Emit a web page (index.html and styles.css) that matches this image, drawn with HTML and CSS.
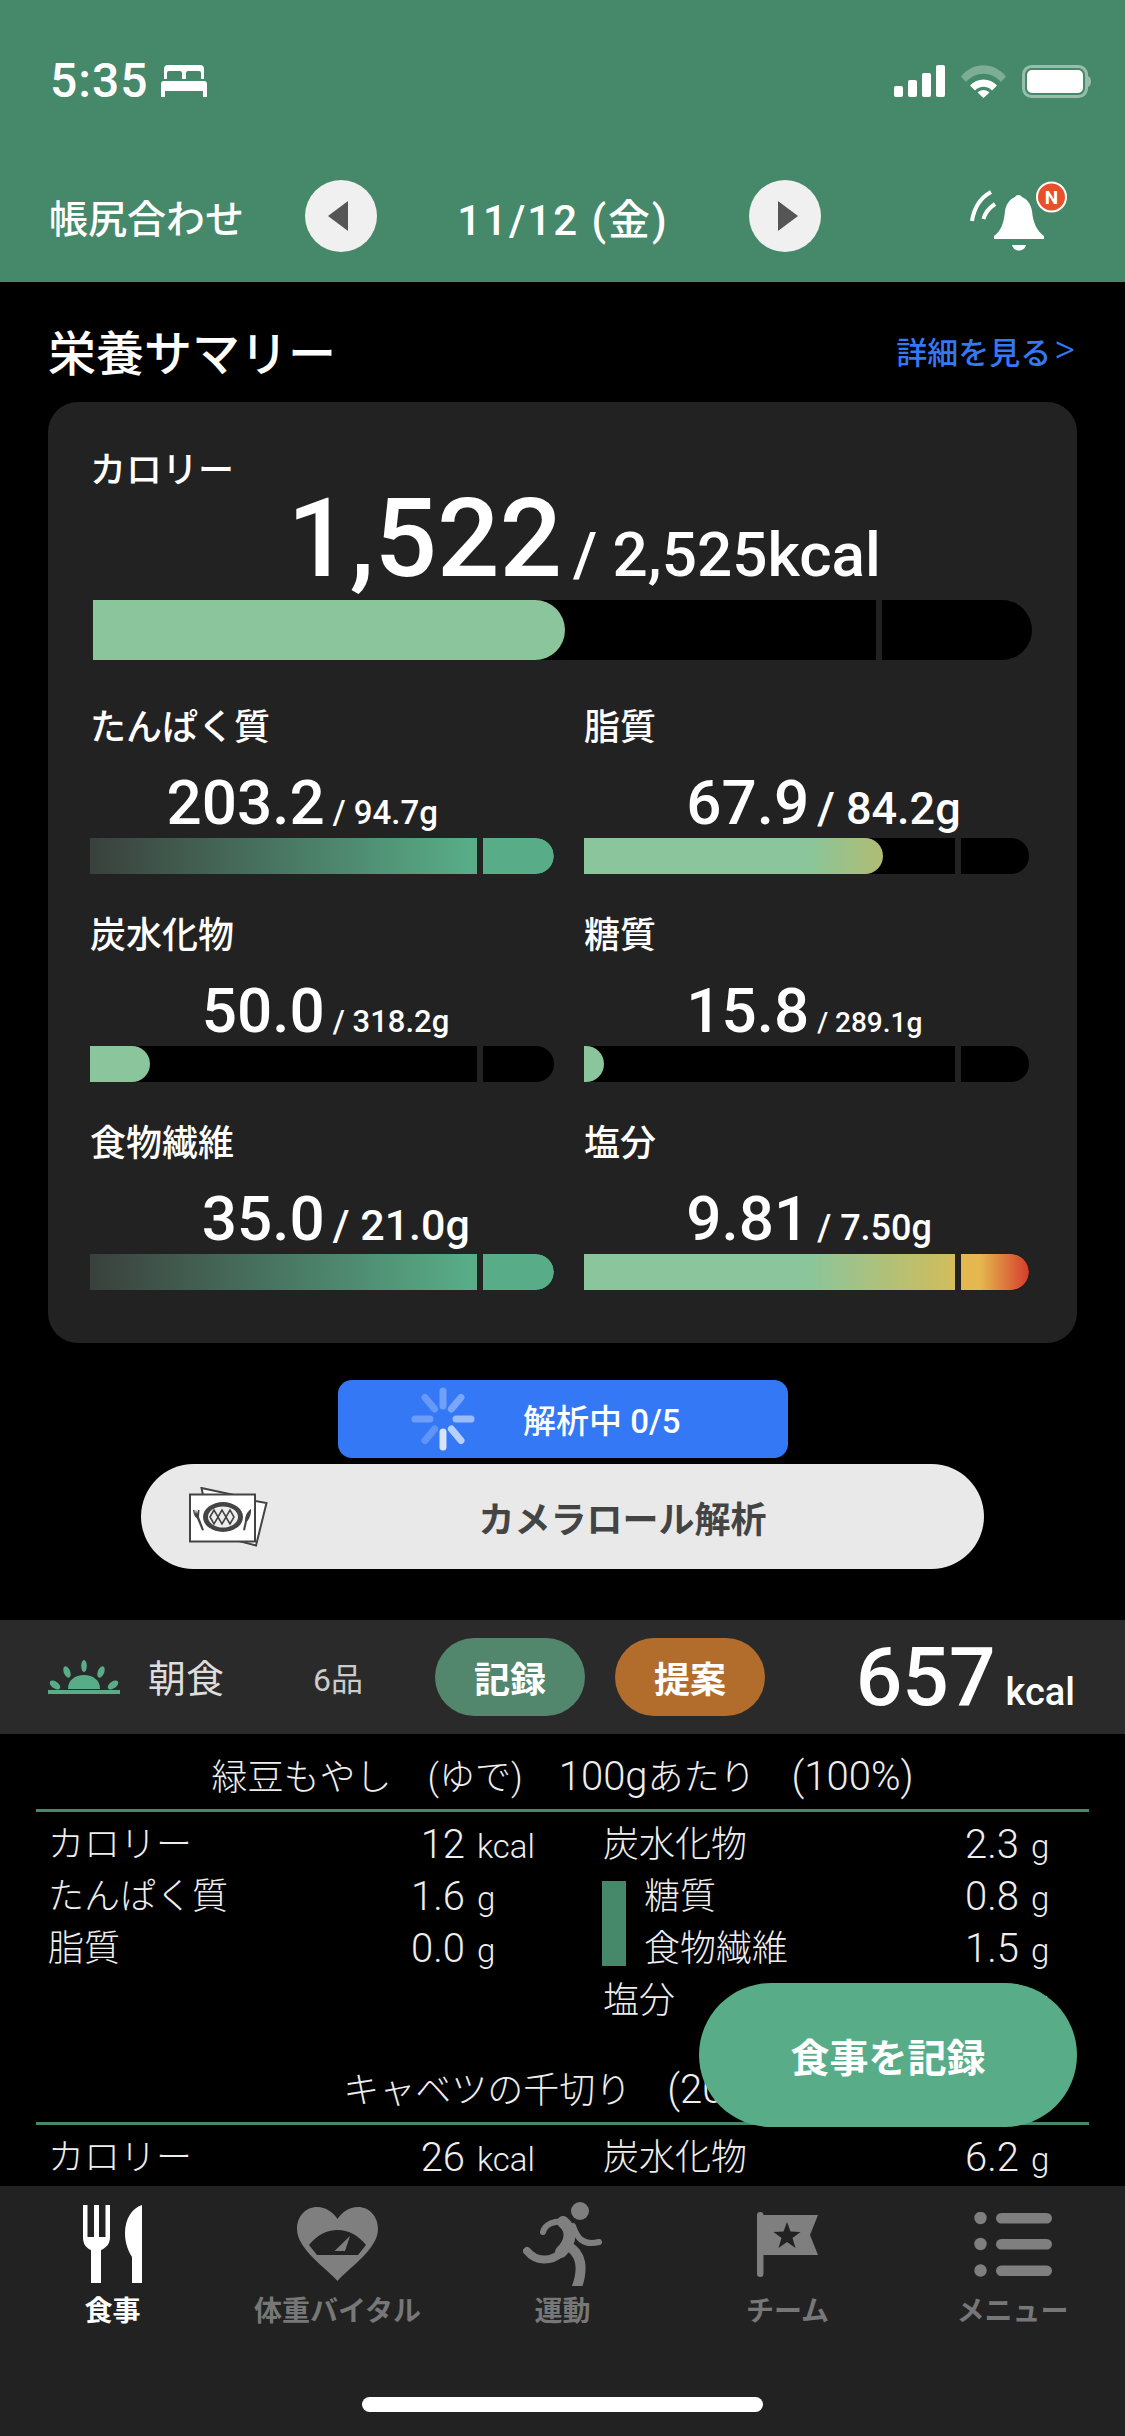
FILE: index.html
```html
<!DOCTYPE html>
<html lang="ja">
<head>
    <meta charset="UTF-8">
    <meta name="viewport" content="width=device-width, initial-scale=1.0">
    <title>栄養サマリー</title>
    <link rel="stylesheet" href="styles.css">
</head>
<body>
    <div class="app">
        <header class="header">
            <div class="status-bar">
                <span class="time">5:35</span>
                <svg class="bed" width="46" height="32" viewBox="0 0 46 32"><path fill="#fff" d="M3 14V4a4 4 0 0 1 4-4H39a4 4 0 0 1 4 4V14H40V8a2 2 0 0 0-2-2H27a2 2 0 0 0-2 2V14H21V8a2 2 0 0 0-2-2H8a2 2 0 0 0-2 2V14ZM0 26V19a3 3 0 0 1 3-3H43a3 3 0 0 1 3 3V26ZM0 26h4v6H0ZM42 26h4v6h-4Z"/></svg>
                <div class="status-icons">
                    <svg width="51" height="32" viewBox="0 0 51 32"><g fill="#fff"><rect x="0" y="21" width="9" height="11" rx="2"/><rect x="14" y="15" width="9" height="17" rx="2"/><rect x="28" y="8" width="9" height="24" rx="2"/><rect x="42" y="0" width="9" height="32" rx="2"/></g></svg>
                    <svg width="45" height="33" viewBox="0 0 45 33"><path fill="#fff" fill-opacity=".3" d="M0 11.500C12 -3.500 33 -3.500 45 11.500L40 17C30 6 15 6 5 17Z"/><path fill="#fff" d="M9 20.500C16 12.500 29 12.500 36 20.500L31 25.500C26.500 20.500 18.500 20.500 14 25.500Z"/><path fill="#fff" d="M16.500 27.500C19.500 24 25.500 24 28.500 27.500L22.500 33Z"/></svg>
                    <svg width="69" height="33" viewBox="0 0 69 33"><rect x="1.500" y="1.500" width="63" height="30" rx="8" fill="none" stroke="#fff" stroke-opacity=".45" stroke-width="3"/><rect x="5" y="5" width="56" height="23" rx="5" fill="#fff"/><path fill="#fff" fill-opacity=".45" d="M66 11c2 .5 3 3 3 5.500s-1 5-3 5.500Z"/></svg>
                </div>
            </div>
            <nav class="date-nav">
                <span class="nav-title">帳尻合わせ</span>
                <button class="round-btn"><svg class="arrow-prev" width="20" height="30" viewBox="0 0 20 30"><path fill="#555" d="M20 0V30L0 15Z"/></svg></button>
                <span class="nav-date">11/12 (金)</span>
                <button class="round-btn"><svg class="arrow-next" width="20" height="30" viewBox="0 0 20 30"><path fill="#555" d="M0 0V30L20 15Z"/></svg></button>
                <div class="bell">
                    <svg width="103" height="75" viewBox="25 18 103 75">
                        <path fill="none" stroke="#fff" stroke-width="4" d="M50 31C39 37 33 47 31 60M54 43C48 47 44 52 42.500 58"/>
                        <path fill="#fff" d="M53 78V75C60 70 63 62 64 50C65 43 69 38 74 36A4 4 0 0 1 81 36C86 38 90 43 91 50C92 62 96 70 103 75V78ZM71 84H85C84 88 81 89.500 78 89.500C75 89.500 72 88 71 84Z"/>
                        <circle cx="110.500" cy="36" r="14.500" fill="#e8502a" stroke="#fff" stroke-width="2"/>
                        <text class="bell-n" x="110.500" y="42.500" text-anchor="middle">N</text>
                    </svg>
                </div>
            </nav>
        </header>

        <main class="content">
            <div class="summary-head">
                <h1>栄養サマリー</h1>
                <a class="detail-link">詳細を見る<span class="chevron">&gt;</span></a>
            </div>

            <section class="card">
                <div class="label">カロリー</div>
                <div class="value value-main"><span class="num">1,522</span><span class="sub">/ 2,525kcal</span></div>
                <div class="bar bar-main">
                    <div class="fill fill-green" style="width: 50.3%"></div>
                    <i class="tick"></i>
                </div>

                <div class="nutrients">
                    <div class="nutrient">
                        <div class="label">たんぱく質</div>
                        <div class="value"><span class="num">203.2</span><span class="sub s33">/ 94.7g</span></div>
                        <div class="bar">
                            <div class="fill fill-over" style="width: 100%"></div>
                            <i class="tick"></i>
                        </div>
                    </div>
                    <div class="nutrient">
                        <div class="label">脂質</div>
                        <div class="value"><span class="num">67.9</span><span class="sub s45">/ 84.2g</span></div>
                        <div class="bar">
                            <div class="fill fill-warn" style="width: 67.2%"></div>
                            <i class="tick"></i>
                        </div>
                    </div>
                    <div class="nutrient">
                        <div class="label">炭水化物</div>
                        <div class="value"><span class="num">50.0</span><span class="sub s31">/ 318.2g</span></div>
                        <div class="bar">
                            <div class="fill fill-green" style="width: 12.9%"></div>
                            <i class="tick"></i>
                        </div>
                    </div>
                    <div class="nutrient">
                        <div class="label">糖質</div>
                        <div class="value"><span class="num">15.8</span><span class="sub s28">/ 289.1g</span></div>
                        <div class="bar">
                            <div class="fill fill-green" style="width: 4.5%"></div>
                            <i class="tick"></i>
                        </div>
                    </div>
                    <div class="nutrient">
                        <div class="label">食物繊維</div>
                        <div class="value"><span class="num">35.0</span><span class="sub s43">/ 21.0g</span></div>
                        <div class="bar">
                            <div class="fill fill-over" style="width: 100%"></div>
                            <i class="tick"></i>
                        </div>
                    </div>
                    <div class="nutrient">
                        <div class="label">塩分</div>
                        <div class="value"><span class="num">9.81</span><span class="sub s36">/ 7.50g</span></div>
                        <div class="bar">
                            <div class="fill fill-salt" style="width: 100%"></div>
                            <i class="tick"></i>
                        </div>
                    </div>
                </div>
            </section>

            <div class="analyzing">
                <svg class="spinner" width="68" height="68" viewBox="-34 -34 68 68">
                    <g stroke="#fff" stroke-width="7" stroke-linecap="round">
                        <line y1="-13" y2="-28" stroke-opacity=".3"/>
                        <line y1="-13" y2="-28" stroke-opacity=".35" transform="rotate(40)"/>
                        <line y1="-13" y2="-28" stroke-opacity=".5" transform="rotate(90)"/>
                        <line y1="-13" y2="-28" stroke-opacity=".65" transform="rotate(140)"/>
                        <line y1="-13" y2="-28" stroke-opacity=".8" transform="rotate(180)"/>
                        <line y1="-13" y2="-28" stroke-opacity=".22" transform="rotate(220)"/>
                        <line y1="-13" y2="-28" stroke-opacity=".28" transform="rotate(270)"/>
                        <line y1="-13" y2="-28" stroke-opacity=".25" transform="rotate(320)"/>
                    </g>
                </svg>
                <span>解析中 0/5</span>
            </div>
            <div class="camera-roll">
                <svg class="camera-icon" width="80" height="60" viewBox="0 0 80 60">
                    <g fill="#fff" stroke="#444" stroke-width="2">
                        <path d="M12.500 1L45 8H14Z"/>
                        <path d="M60 13L77.500 16L67 58.500L50 54H62Z"/>
                        <rect x="1" y="7.500" width="65" height="47"/>
                    </g>
                    <ellipse cx="34" cy="30" rx="20" ry="15" fill="#444"/>
                    <ellipse cx="34" cy="30" rx="15" ry="10.500" fill="#eee"/>
                    <path fill="none" stroke="#444" stroke-width="1.600" d="M21 30L25 23L29 30L33 23L37 30L41 23L45 30L41 37L37 30L33 37L29 30L25 37Z"/>
                    <path fill="#444" d="M4 23L5.500 23L6 27L7 22.500L8 27L9 23L10.500 23L10 30L15 43L13 43.500L8 31.500C5.500 30 4.500 27 4 23Z"/>
                    <path fill="#444" d="M62 22C62.500 27 60 33 58 34.500L56 43.500L54 43L56 34C56 28 59 24 62 22Z"/>
                </svg>
                <span>カメラロール解析</span>
            </div>

            <div class="meal-head">
                <svg class="sun" width="72" height="34" viewBox="0 0 72 34">
                    <g fill="#58ad88">
                        <rect x="0" y="30" width="72" height="4"/>
                        <path d="M20 29C20 20 27 15 36 15C45 15 52 20 52 29Z"/>
                        <ellipse cx="36" cy="6" rx="2.800" ry="6"/>
                        <ellipse cx="19" cy="12" rx="3.200" ry="6" transform="rotate(-22 19 12)"/>
                        <ellipse cx="53" cy="12" rx="3.200" ry="6" transform="rotate(22 53 12)"/>
                        <ellipse cx="7" cy="25" rx="3.500" ry="6" transform="rotate(-55 7 25)"/>
                        <ellipse cx="65" cy="25" rx="3.500" ry="6" transform="rotate(55 65 25)"/>
                    </g>
                </svg>
                <span class="meal-name">朝食</span>
                <span class="meal-count">6品</span>
                <button class="pill pill-record">記録</button>
                <button class="pill pill-suggest">提案</button>
                <div class="meal-kcal"><span class="meal-num">657</span><span class="meal-unit">kcal</span></div>
            </div>

            <section class="food">
                <div class="food-title">緑豆もやし　(ゆで)　<span class="latin">100g</span>あたり　<span class="latin">(100%)</span></div>
                <div class="food-grid">
                    <div class="col col-left">
                        <div class="row"><span>カロリー</span><span class="amount">12<span class="unit">kcal</span></span></div>
                        <div class="row"><span>たんぱく質</span><span class="amount">1.6<span class="unit">g</span></span></div>
                        <div class="row"><span>脂質</span><span class="amount">0.0<span class="unit">g</span></span></div>
                    </div>
                    <div class="col col-right">
                        <div class="row"><span>炭水化物</span><span class="amount">2.3<span class="unit">g</span></span></div>
                        <div class="sub-group">
                            <div class="sub-mark"></div>
                            <div class="sub-rows">
                                <div class="row"><span>糖質</span><span class="amount">0.8<span class="unit">g</span></span></div>
                                <div class="row"><span>食物繊維</span><span class="amount">1.5<span class="unit">g</span></span></div>
                            </div>
                        </div>
                        <div class="row"><span>塩分</span><span class="amount">0.0<span class="unit">g</span></span></div>
                    </div>
                </div>
            </section>

            <section class="food">
                <div class="food-title">キャベツの千切り　<span class="latin">(200g)</span></div>
                <div class="food-grid">
                    <div class="col col-left">
                        <div class="row"><span>カロリー</span><span class="amount">26<span class="unit">kcal</span></span></div>
                    </div>
                    <div class="col col-right">
                        <div class="row"><span>炭水化物</span><span class="amount">6.2<span class="unit">g</span></span></div>
                    </div>
                </div>
            </section>

            <button class="record-fab">食事を記録</button>
        </main>

        <footer class="tabbar">
            <div class="tab active">
                <div class="tab-icon">
                    <svg width="60" height="78" viewBox="0 0 60 78"><path fill="#fff" d="M0 0H4.500V32H11V0H16V32H22.500V0H27V32C27 39 23 43 18 45V78H8V45C3 43 0 39 0 32Z"/><path fill="#fff" d="M59 0V78H49V52C44 44 42 36 42 28C42 14 49 3 59 0Z"/></svg>
                </div>
                <span>食事</span>
            </div>
            <div class="tab">
                <div class="tab-icon">
                    <svg width="81" height="74" viewBox="0 0 81 74"><path fill="#7f7f7f" d="M40.500 74C28 60 0 42 0 22C0 9 9 0 20 0C29 0 36 5 40.500 12C45 5 52 0 61 0C72 0 81 9 81 22C81 42 53 60 40.500 74Z"/><path fill="#222" d="M12 38C20 28 30 23 40.500 23C51 23 61 28 69 38L61 48H20Z"/><path fill="#7f7f7f" d="M53 29L48 44H37.500Z"/></svg>
                </div>
                <span>体重バイタル</span>
            </div>
            <div class="tab">
                <div class="tab-icon">
                    <svg width="80" height="84" viewBox="0 0 80 84">
                        <ellipse cx="57" cy="9" rx="9" ry="9" fill="#7f7f7f"/>
                        <g fill="none" stroke="#7f7f7f" stroke-linecap="round">
                            <path stroke-width="6" d="M20 30C22 22 32 18 42 20"/>
                            <path stroke-width="12" d="M40 20C50 28 48 40 38 50"/>
                            <path stroke-width="8" d="M38 51C28 60 13 60 4 49"/>
                            <path stroke-width="10" d="M44 44C58 50 62 66 52 90"/>
                            <path stroke-width="6" d="M50 24C54 36 60 44 76 40"/>
                        </g>
                    </svg>
                </div>
                <span>運動</span>
            </div>
            <div class="tab">
                <div class="tab-icon">
                    <svg width="61" height="65" viewBox="0 0 61 65"><rect width="6.500" height="65" rx="3.200" fill="#7f7f7f"/><path fill="#7f7f7f" d="M6 3H61L53 23L61 43H6Z"/><path fill="#222" d="M30 10L33.500 19.500L43.500 20L35.500 26L38.500 36L30 30L21.500 36L24.500 26L16.500 20L26.500 19.500Z"/></svg>
                </div>
                <span>チーム</span>
            </div>
            <div class="tab">
                <div class="tab-icon">
                    <svg width="78" height="65" viewBox="0 0 78 65"><g fill="#7f7f7f"><circle cx="6.500" cy="6" r="6.200"/><circle cx="6.500" cy="32" r="6.200"/><circle cx="6.500" cy="58.500" r="6.200"/><rect x="22" y="1" width="56" height="10.500" rx="5.200"/><rect x="22" y="27" width="56" height="10.500" rx="5.200"/><rect x="22" y="53.500" width="56" height="10.500" rx="5.200"/></g></svg>
                </div>
                <span>メニュー</span>
            </div>
            <div class="home-indicator"></div>
        </footer>
    </div>
</body>
</html>
```

FILE: styles.css
```css
* {
    box-sizing: border-box;
}
body {
    margin: 0;
    background-color: #000;
    color: #fff;
    font-family: Roboto, "Noto Sans CJK JP", sans-serif;
}
button {
    border: none;
    padding: 0;
    font-family: inherit;
}
.app {
    width: 1125px;
    height: 2436px;
    display: flex;
    flex-direction: column;
    overflow: hidden;
}

/* Green header */
.header {
    height: 282px;
    padding-top: 58px;
    background-color: #46886a;
    flex-shrink: 0;
}
.status-bar {
    display: flex;
    align-items: center;
    height: 46px;
    padding: 0 34px 0 50px;
}
.time {
    font-size: 48px;
    font-weight: 500;
    line-height: 46px;
    letter-spacing: 1px;
}
.bed {
    margin-left: 12px;
}
.status-icons {
    display: flex;
    align-items: center;
    gap: 16px;
    margin-left: auto;
}
.date-nav {
    display: flex;
    align-items: center;
    height: 72px;
    margin-top: 76px;
    padding: 0 56px 0 49px;
}
.nav-title {
    width: 256px;
    font-size: 39px;
    font-weight: 500;
}
.round-btn {
    width: 72px;
    height: 72px;
    border-radius: 50%;
    background-color: #f0f0f0;
    display: flex;
    align-items: center;
    justify-content: center;
}
.arrow-prev {
    margin-right: 6px;
}
.arrow-next {
    margin-left: 6px;
}
.nav-date {
    flex: 1;
    text-align: center;
    font-size: 42px;
    font-weight: 500;
    letter-spacing: 2px;
}
.bell {
    display: flex;
    margin-left: 145px;
}
.bell-n {
    font-size: 19px;
    font-weight: 700;
    fill: #fff;
}

/* Scrolling part */
.content {
    position: relative;
    flex: 1;
    overflow: hidden;
}
.summary-head {
    display: flex;
    align-items: center;
    justify-content: space-between;
    height: 96px;
    margin: 20px 0 4px;
    padding: 0 50px 0 48px;
}
h1 {
    margin: 0;
    font-size: 48px;
    font-weight: 500;
}
.detail-link {
    display: flex;
    align-items: center;
    font-size: 31px;
    font-weight: 500;
    color: #3478f6;
}
.chevron {
    margin-left: 3px;
    font-size: 40px;
    font-weight: 300;
    line-height: 40px;
}
.card {
    margin: 0 48px;
    padding: 44px 48px 53px 42px;
    background-color: #222;
    border-radius: 30px;
}
.label {
    height: 47px;
    padding-top: 3px;
    font-size: 36px;
    font-weight: 500;
    line-height: 44px;
}
.value {
    display: flex;
    align-items: baseline;
    height: 88px;
    line-height: 106px;
}
.num {
    width: 50.6%;
    text-align: right;
    font-size: 62px;
    font-weight: 500;
}
.sub {
    margin-left: 8px;
    font-weight: 500;
}
.s28 {
    font-size: 28px;
}
.s31 {
    font-size: 31px;
}
.s33 {
    font-size: 33px;
}
.s36 {
    font-size: 36px;
}
.s43 {
    font-size: 43px;
}
.s45 {
    font-size: 45px;
}
.value-main {
    height: 107px;
    line-height: 92px;
}
.value-main .num {
    width: 472px;
    font-size: 110px;
}
.value-main .sub {
    margin-left: 11px;
    font-size: 62px;
}
.bar {
    position: relative;
    height: 36px;
    background-color: #000;
    border-radius: 0 18px 18px 0;
    overflow: hidden;
}
.fill {
    height: 100%;
    border-radius: 0 18px 18px 0;
}
.fill-green {
    background: #8ac59b;
}
.fill-over {
    background: linear-gradient(90deg, #3a403c 0%, #58ad88 82%);
}
.fill-warn {
    background: linear-gradient(90deg, #8ac59b 0%, #8ac59b 75%, #b0bc72 100%);
}
.fill-salt {
    background: linear-gradient(90deg, #8ac59b 0%, #8ac59b 50%, #cfbd5e 82%, #e4b84e 86%, #e4b84e 89%, #d63c2c 100%);
}
.tick {
    position: absolute;
    top: 0;
    bottom: 0;
    left: 83.4%;
    width: 6px;
    background-color: #222;
}
.bar-main {
    height: 60px;
    width: 939px;
    margin: 0 -3px 43px 3px;
    border-radius: 0 30px 30px 0;
}
.bar-main .fill {
    border-radius: 0 30px 30px 0;
}
.nutrients {
    display: grid;
    grid-template-columns: 464px 445px;
    column-gap: 30px;
    row-gap: 37px;
}
.analyzing {
    position: relative;
    display: flex;
    align-items: center;
    width: 450px;
    height: 78px;
    margin: 37px 0 0 338px;
    padding-left: 185px;
    background-color: #3478f6;
    border-radius: 14px;
    font-size: 33px;
    font-weight: 500;
}
.spinner {
    position: absolute;
    left: 71px;
    top: 5px;
}
.camera-roll {
    position: relative;
    display: flex;
    align-items: center;
    justify-content: center;
    width: 843px;
    height: 105px;
    margin: 6px 0 0 141px;
    padding-left: 120px;
    background-color: #e9e9e9;
    border-radius: 53px;
    color: #444;
    font-size: 36px;
    font-weight: 700;
}
.camera-icon {
    position: absolute;
    left: 48px;
    top: 23px;
}

/* Meal list */
.meal-head {
    display: flex;
    align-items: center;
    height: 114px;
    margin-top: 51px;
    padding: 0 50px 0 48px;
    background-color: #2a2a2a;
}
.sun {
    margin-right: 28px;
}
.meal-name {
    width: 165px;
    padding-bottom: 3px;
    font-size: 38px;
    color: #ddd;
}
.meal-count {
    width: 122px;
    font-size: 32px;
    color: #ccc;
}
.pill {
    width: 150px;
    height: 78px;
    border-radius: 39px;
    color: #fff;
    font-size: 36px;
    font-weight: 700;
}
.pill-record {
    background-color: #52866d;
}
.pill-suggest {
    margin-left: 30px;
    background-color: #b26d2c;
}
.meal-kcal {
    display: flex;
    align-items: baseline;
    margin-left: auto;
}
.meal-num {
    font-size: 82px;
    font-weight: 500;
}
.meal-unit {
    margin-left: 10px;
    font-size: 38px;
    font-weight: 500;
}
.food {
    padding-bottom: 20px;
}
.food-title {
    height: 78px;
    margin: 0 36px;
    padding-top: 18px;
    border-bottom: 3px solid #46886a;
    text-align: center;
    font-size: 36px;
    font-weight: 300;
    line-height: 50px;
    color: #eee;
}
.latin {
    font-size: 40px;
}
.food-grid {
    display: grid;
    grid-template-columns: 487px 445px;
    column-gap: 68px;
    padding: 7px 0 0 48px;
    font-size: 36px;
    font-weight: 300;
    color: #eee;
}
.row {
    display: flex;
    justify-content: space-between;
    height: 52px;
    line-height: 52px;
}
.amount {
    display: flex;
    align-items: baseline;
    font-size: 40px;
}
.unit {
    width: 17px;
    margin-left: 12px;
    font-size: 33px;
}
.col-left .unit {
    width: 58px;
}
.sub-group {
    display: flex;
    align-items: center;
}
.sub-mark {
    flex-shrink: 0;
    width: 24px;
    height: 85px;
    margin: 0 18px 0 -1px;
    background-color: #46886a;
}
.sub-rows {
    flex: 1;
}
.record-fab {
    position: absolute;
    left: 699px;
    top: 1701px;
    width: 378px;
    height: 144px;
    border-radius: 72px;
    background-color: #58ad88;
    color: #fff;
    font-size: 39px;
    font-weight: 700;
}

/* Bottom tabs */
.tabbar {
    position: relative;
    display: grid;
    grid-template-columns: repeat(5, 1fr);
    align-items: start;
    height: 250px;
    flex-shrink: 0;
    padding-top: 16px;
    background-color: #222;
}
.tab {
    display: flex;
    flex-direction: column;
    align-items: center;
    color: #777;
    font-size: 28px;
    font-weight: 700;
    line-height: 40px;
}
.tab.active {
    color: #fff;
}
.tab-icon {
    display: flex;
    align-items: center;
    height: 84px;
    margin-bottom: 6px;
}
.home-indicator {
    position: absolute;
    left: 362px;
    top: 211px;
    width: 401px;
    height: 15px;
    border-radius: 8px;
    background-color: #fff;
}
```
